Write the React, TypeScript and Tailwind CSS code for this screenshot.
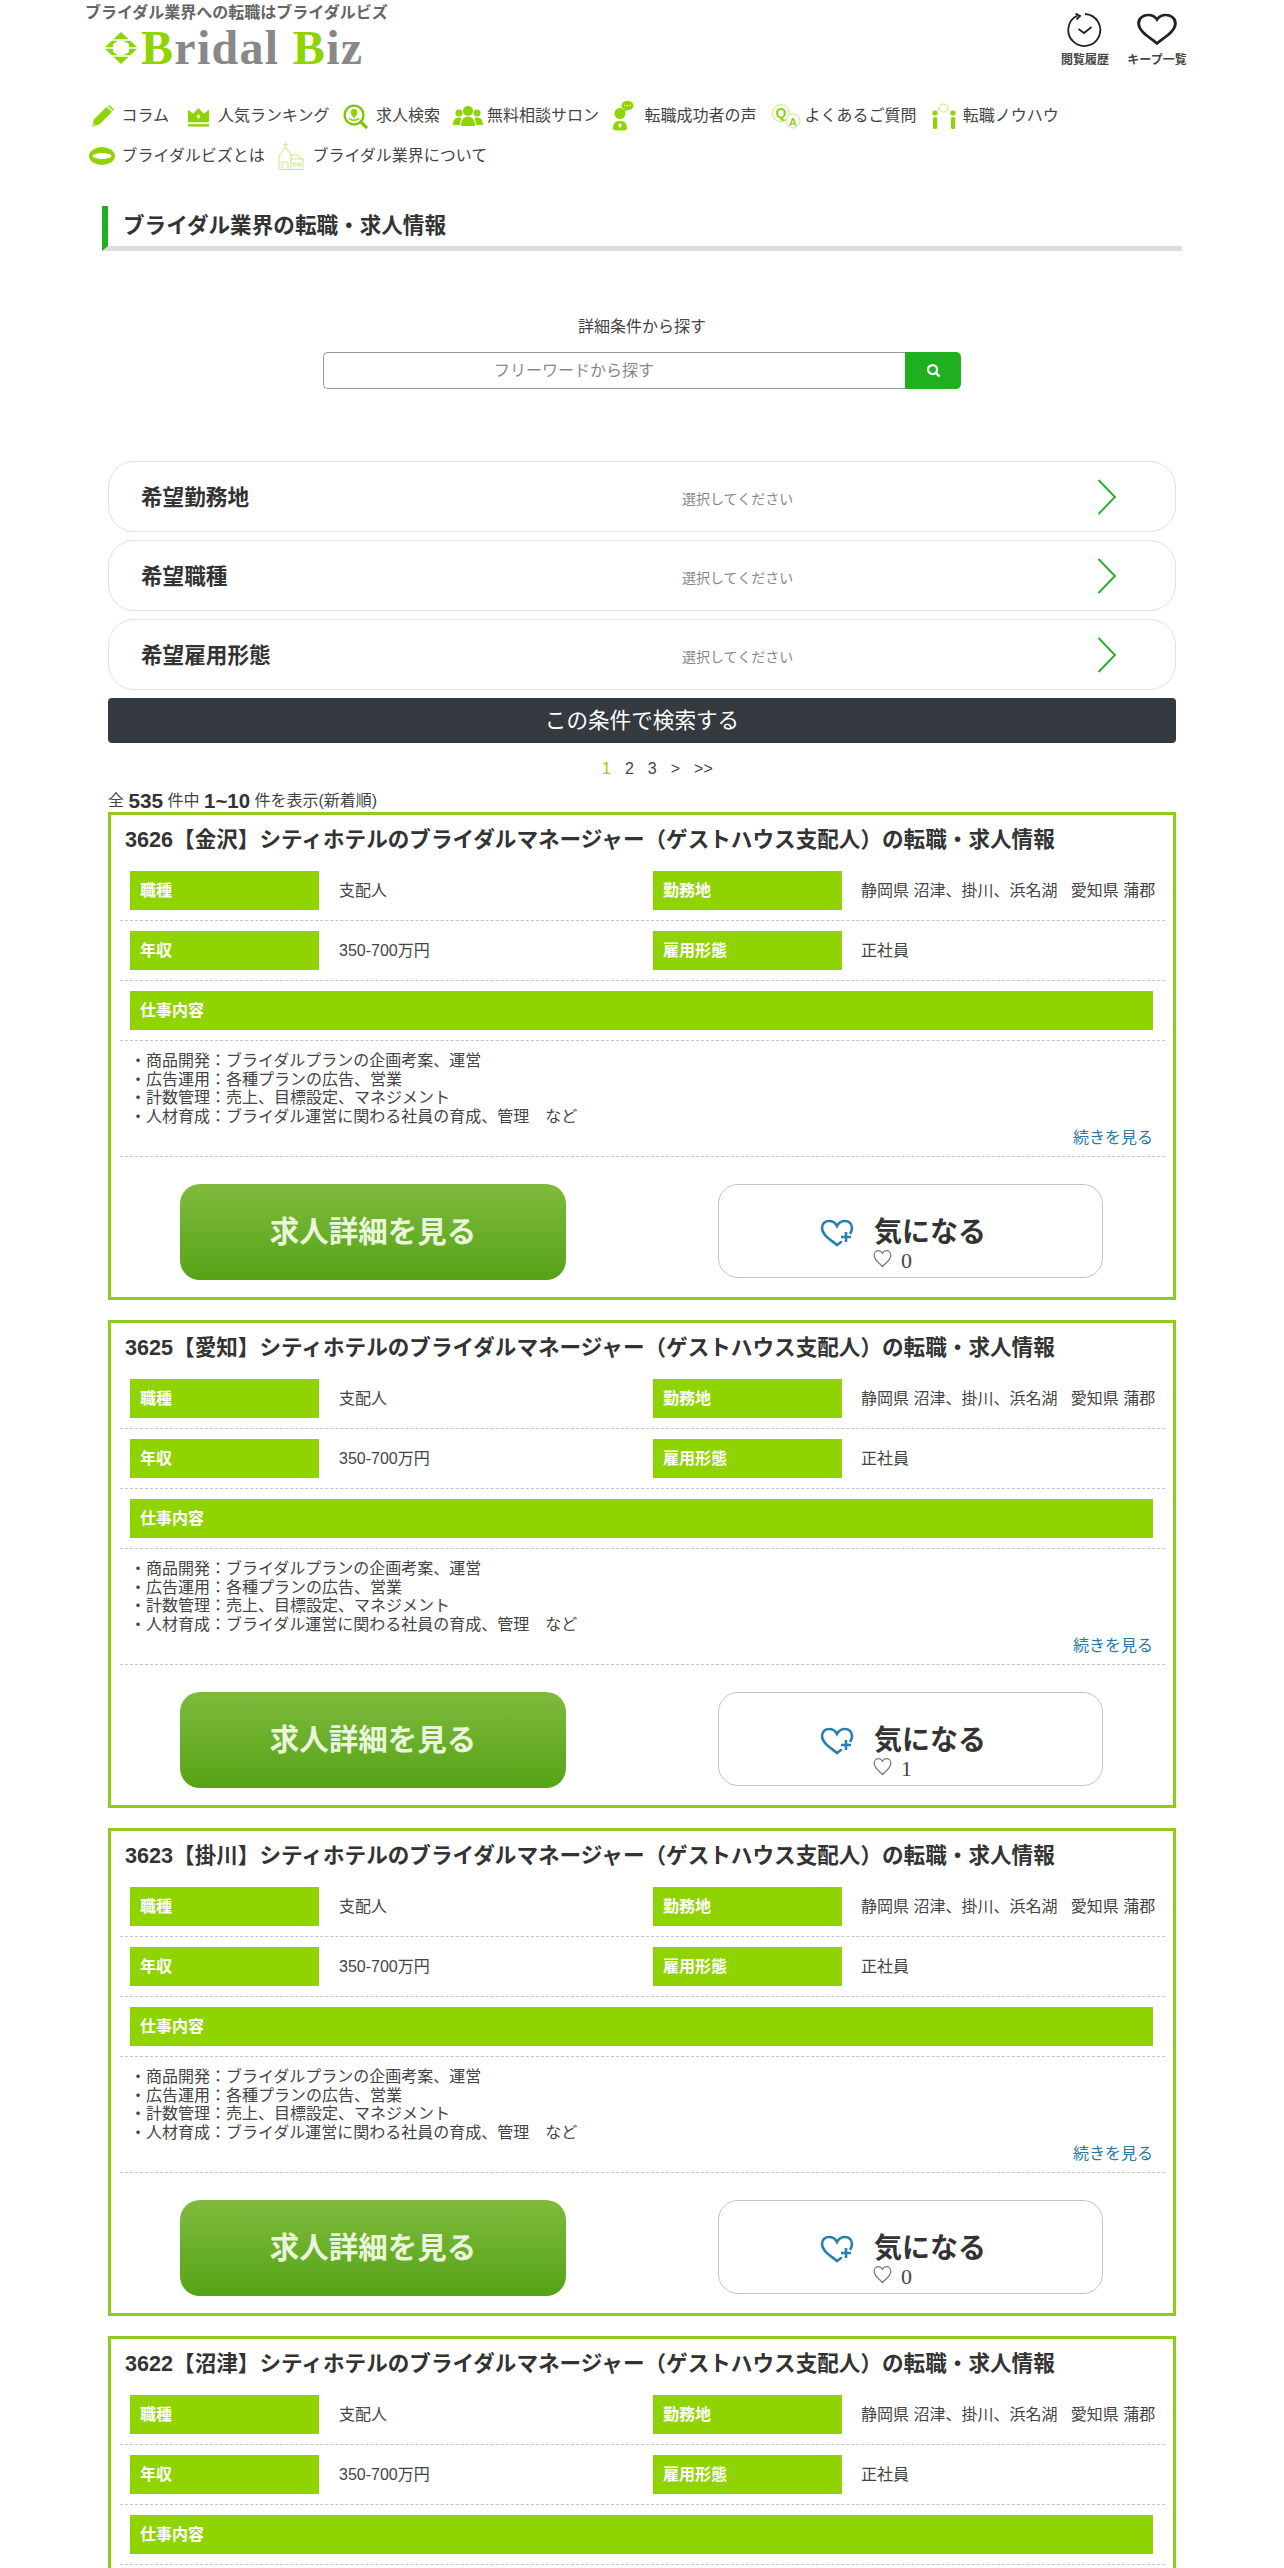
const font = "font-['Liberation_Sans','Noto_Sans_CJK_JP',sans-serif]";

const heartPath = "M12 21 C9 17.5 2 13.5 2 7.5 C2 4 4.6 2 7.2 2 C9.2 2 11 3.1 12 5 C13 3.1 14.8 2 16.8 2 C19.4 2 22 4 22 7.5 C22 13.5 15 17.5 12 21 Z";

function LogoMark() {
  return (
    <svg viewBox="0 0 34 32" className="w-[34px] h-[32px] shrink-0">
      <path d="M17 0 L34 16 L17 32 L0 16 Z" fill="#8fd400" />
      <path d="M14 9 H20 L25 12 V20 L20 23 H14 L9 20 V12 Z" fill="#fff" />
      <path d="M0 16 H10 M24 16 H34 M7 8 H27 M7 24 H27" stroke="#fff" strokeWidth="1.300" />
    </svg>
  );
}

function PencilIcon() {
  return (
    <svg viewBox="0 0 24 24" className="w-[23px] h-[23px] ml-[2px] shrink-0">
      <path d="M1 23 L3 15 L16 2 L22 7 L9 20 Z" fill="#8fd400" />
      <path d="M17.500 1 L19 0 L24 4.500 L23 6 Z" fill="#8fd400" />
      <path d="M1 23 L2 18.500 L5.500 22 Z" fill="#c5e88a" />
    </svg>
  );
}

function CrownIcon() {
  return (
    <svg viewBox="0 0 24 24" className="w-[23px] h-[23px] ml-[5px] shrink-0">
      <path d="M1 5 L6.500 9 L12 3 L17.500 9 L23 5 V18 H1 Z" fill="#8fd400" />
      <path d="M12 9.500 L14 12 L12 14.500 L10 12 Z" fill="#fff" />
      <rect x="1" y="20" width="22" height="2.500" fill="#8fd400" />
    </svg>
  );
}

function SearchPersonIcon() {
  return (
    <svg viewBox="0 0 26 26" className="w-[25px] h-[25px] shrink-0">
      <circle cx="11.500" cy="11.500" r="9.800" fill="none" stroke="#7cc600" strokeWidth="2.400" />
      <path d="M18.500 18.500 L24 24" stroke="#7cc600" strokeWidth="3.200" strokeLinecap="round" />
      <path d="M11.500 5 C14 5 15 7 15 8.500 C15 11 13 12.500 11.500 15 C10 12.500 8 11 8 8.500 C8 7 9 5 11.500 5 Z" fill="#8fd400" />
      <path d="M6.500 14.500 C7.500 17.500 15.500 17.500 16.500 14.500" fill="none" stroke="#8fd400" strokeWidth="1.600" />
    </svg>
  );
}

function PeopleIcon() {
  return (
    <svg viewBox="0 0 30 24" className="w-[30px] h-[24px] shrink-0">
      <g fill="#8fd400">
        <circle cx="6" cy="9" r="3.600" />
        <path d="M0 21 C0 15 3 13.500 6 13.500 C7 13.500 8 13.700 8.800 14.200 C7.500 16 7 18.500 7 21 Z" />
        <circle cx="24" cy="9" r="3.600" />
        <path d="M30 21 C30 15 27 13.500 24 13.500 C23 13.500 22 13.700 21.200 14.200 C22.500 16 23 18.500 23 21 Z" />
        <circle cx="15" cy="7" r="5" />
        <path d="M8 22 C8 15 11 12.800 15 12.800 C19 12.800 22 15 22 22 Z" />
      </g>
    </svg>
  );
}

function VoiceIcon() {
  return (
    <svg viewBox="0 0 22 32" className="w-[22px] h-[32px] shrink-0">
      <g fill="#8fd400">
        <path d="M15.500 1 C19 1 21.500 3 21.500 5.500 C21.500 8 19 10 15.500 10 L12 12 L12.500 9.500 C10.500 8.700 9.500 7.200 9.500 5.500 C9.500 3 12 1 15.500 1 Z" />
        <circle cx="8" cy="13.500" r="5.500" />
        <path d="M1 29 C1 23 3.500 21 8 21 C12.500 21 15 23 15 29 C15 31 1 31 1 29 Z" />
      </g>
      <g fill="#fff">
        <circle cx="12.800" cy="5.500" r="0.800" />
        <circle cx="15.500" cy="5.500" r="0.800" />
        <circle cx="18.200" cy="5.500" r="0.800" />
        <path d="M8 23 L10 25 L8 28 L6 25 Z" />
      </g>
    </svg>
  );
}

function QaIcon() {
  return (
    <svg viewBox="0 0 30 25" className="w-[30px] h-[25px] ml-[1px] shrink-0">
      <circle cx="10" cy="9" r="8.500" fill="none" stroke="#c5e88a" strokeWidth="1" />
      <circle cx="22" cy="17" r="7" fill="#fff" stroke="#c5e88a" strokeWidth="1" />
      <text x="10" y="14" textAnchor="middle" fontSize="14" fontWeight="700" fill="#8fd400" fontFamily="Liberation Sans">Q</text>
      <text x="22" y="21.500" textAnchor="middle" fontSize="11" fontWeight="700" fill="#8fd400" fontFamily="Liberation Sans">A</text>
    </svg>
  );
}

function KnowhowIcon() {
  return (
    <svg viewBox="0 0 24 26" className="w-[24px] h-[26px] ml-[2px] shrink-0">
      <g fill="#8fd400">
        <circle cx="3" cy="10" r="2.600" />
        <circle cx="21" cy="10" r="2.600" />
        <rect x="1" y="14" width="4.200" height="12" rx="1.500" />
        <rect x="19" y="14" width="4.200" height="12" rx="1.500" />
      </g>
      <ellipse cx="11.500" cy="5" rx="4.500" ry="4" fill="none" stroke="#b8e070" strokeWidth="0.800" />
      <path d="M5 9 C6 6 7 6 7.500 6 M19 9 C18 7 17 7 15.500 7" fill="none" stroke="#b8e070" strokeWidth="0.800" />
    </svg>
  );
}

function RingIcon() {
  return (
    <svg viewBox="0 0 26 20" className="w-[26px] h-[20px] shrink-0">
      <ellipse cx="13" cy="10" rx="13" ry="9" fill="#8fd400" />
      <ellipse cx="13" cy="10" rx="9.500" ry="3" fill="#fff" />
    </svg>
  );
}

function ChurchIcon() {
  return (
    <svg viewBox="0 0 26 28" className="w-[26px] h-[28px] shrink-0">
      <g fill="none" stroke="#c5e88a" strokeWidth="1">
        <path d="M7.500 0.500 V5 M5.500 2.500 H9.500" />
        <path d="M1 14 L7.500 5 L13 13 V27.500 H1 Z" />
        <path d="M13 17 H25 V27.500 H13 M12 13 L19 13 L25.500 18" />
        <path d="M4 27.500 V20 H10 V27.500" />
        <path d="M15.500 21 H18 V24 H15.500 Z M20 21 H22.500 V24 H20 Z" />
      </g>
    </svg>
  );
}

function NavItem({ icon, width, label }: { icon: React.ReactNode; width: string; label: string }) {
  return (
    <div className="flex items-center gap-[7px] mr-[13px]">
      <div className={`${width} flex items-center`}>{icon}</div>
      <span className="text-[16px] text-[#444]">{label}</span>
    </div>
  );
}

function SearchRow({ label }: { label: string }) {
  return (
    <div className="h-[71px] mb-[8px] flex items-center pl-[32px] pr-[58px] rounded-[26px] border border-[#e2e2e2]">
      <div className="w-[541px] pt-[3px] text-[21.6px] font-bold text-[#333]">{label}</div>
      <div className="flex-1 pt-[5px] text-[14px] text-[#888]">選択してください</div>
      <svg viewBox="0 0 20 36" className="w-[20px] h-[36px]">
        <path d="M1.500 1 L18 18 L1.500 35" fill="none" stroke="#1db022" strokeWidth="1.800" />
      </svg>
    </div>
  );
}

function Label({ text, className }: { text: string; className: string }) {
  return (
    <div className={`${className} h-[39px] flex items-center pl-[10px] pt-[1px] bg-[#8fd400] text-white font-bold text-[16px]`}>{text}</div>
  );
}

function JobCard({ no, area, count }: { no: string; area: string; count: number }) {
  return (
    <div className="h-[488px] mb-[20px] border-[3px] border-[#8ecb1a]">
      <div className="h-[56px] flex items-center pl-[14px] pb-[5px] text-[21.6px] font-bold text-[#333] whitespace-nowrap">
        {no}【{area}】シティホテルのブライダルマネージャー（ゲストハウス支配人）の転職・求人情報
      </div>
      <div className="ml-[9px] mr-[8px]">
        <div className="flex pl-[10px] pb-[10px] border-b border-dashed border-[#c4c4c4]">
          <Label text="職種" className="w-[189px]" />
          <div className="w-[334px] pl-[20px] flex items-center text-[16px] text-[#444]">支配人</div>
          <Label text="勤務地" className="w-[189px]" />
          <div className="flex-1 pl-[19px] flex items-center text-[16px] text-[#444] whitespace-nowrap">静岡県 沼津、掛川、浜名湖&nbsp;&nbsp;&nbsp;愛知県 蒲郡</div>
        </div>
        <div className="flex pl-[10px] pt-[10px] pb-[10px] border-b border-dashed border-[#c4c4c4]">
          <Label text="年収" className="w-[189px]" />
          <div className="w-[334px] pl-[20px] flex items-center text-[16px] text-[#444]">350-700万円</div>
          <Label text="雇用形態" className="w-[189px]" />
          <div className="flex-1 pl-[19px] flex items-center text-[16px] text-[#444]">正社員</div>
        </div>
        <div className="px-[10px] pr-[12px] pt-[10px] pb-[10px] border-b border-dashed border-[#c4c4c4]">
          <Label text="仕事内容" className="w-full" />
        </div>
        <div className="pt-[11px] pb-[7px] pl-[10px] pr-[12px] border-b border-dashed border-[#c4c4c4]">
          <div className="text-[16px] leading-[18.7px] text-[#444]">
            <div>・商品開発：ブライダルプランの企画考案、運営</div>
            <div>・広告運用：各種プランの広告、営業</div>
            <div>・計数管理：売上、目標設定、マネジメント</div>
            <div>・人材育成：ブライダル運営に関わる社員の育成、管理　など</div>
          </div>
          <div className="h-[22px] flex items-center justify-end text-[16px] text-[#2a78a8]">続きを見る</div>
        </div>
      </div>
      <div className="flex pl-[69px] pt-[27px]">
        <div className="w-[386px] h-[96px] flex items-center justify-center rounded-[20px] bg-gradient-to-b from-[#7fba3c] to-[#55a314] text-[29.5px] font-bold text-[#eaf6dc]">
          求人詳細を見る
        </div>
        <div className="ml-[152px] w-[385px] h-[94px] pt-[31px] flex flex-col items-center rounded-[20px] border border-[#c4c4c4]">
          <div className="flex items-center h-[34px] gap-[20px] mr-[15px]">
            <svg viewBox="0 0 34 28" className="w-[34px] h-[28px]">
              <path d="M17 26 C11 21 2 16 2 9 C2 4.500 5.500 2 9 2 C12.500 2 15.500 4 17 7 C18.500 4 21.500 2 25 2 C28.500 2 32 4.500 32 9 C32 11 31.500 12.500 30.500 14" fill="none" stroke="#2a7fb0" strokeWidth="2.600" strokeLinecap="round" />
              <path d="M17 26 L21 23" fill="none" stroke="#2a7fb0" strokeWidth="2.600" strokeLinecap="round" />
              <path d="M26 13 V23 M21 18 H31" stroke="#2a7fb0" strokeWidth="2.600" />
            </svg>
            <span className="text-[28px] font-bold text-[#333]">気になる</span>
          </div>
          <div className="flex items-center gap-[7px] mr-[38px] mt-[1px]">
            <svg viewBox="0 0 24 24" className="w-[23px] h-[20px] -mt-[4px]">
              <path d={heartPath} fill="none" stroke="#777" strokeWidth="1.500" />
            </svg>
            <span className="font-['Liberation_Serif',serif] text-[22px] leading-[20px] text-[#444]">{count}</span>
          </div>
        </div>
      </div>
    </div>
  );
}

export default function App() {
  return (
    <div className={`${font} h-[2568px] overflow-hidden bg-white`}>
      <header className="h-[95px] flex justify-between pl-[85px] pr-[96px]">
        <div>
          <p className="h-[26px] pt-[2px] text-[16px] leading-[22px] font-bold text-[#666]">ブライダル業界への転職はブライダルビズ</p>
          <div className="flex items-center gap-[3px] ml-[19px] h-[44px]">
            <LogoMark />
            <span className="font-['Liberation_Serif',serif] font-bold text-[48px] leading-[44px] tracking-[1.300px] text-[#888]">
              <span className="text-[#8fd400]">B</span>ridal <span className="text-[#8fd400]">B</span>iz
            </span>
          </div>
        </div>
        <div className="flex gap-[10px] pt-[12px]">
          <div className="w-[62px] flex flex-col items-center">
            <svg viewBox="0 0 36 36" className="w-[36px] h-[36px]">
              <path d="M10.500 3.500 A16 16 0 1 0 18 2" fill="none" stroke="#222" strokeWidth="1.800" />
              <path d="M8.500 1.500 L13 4 L9.500 7.500" fill="none" stroke="#222" strokeWidth="1.800" />
              <path d="M11.500 17 L17 21 L24.500 15" fill="none" stroke="#222" strokeWidth="1.800" />
            </svg>
            <span className="mt-[3px] text-[12px] font-bold text-[#444] whitespace-nowrap">閲覧履歴</span>
          </div>
          <div className="w-[62px] flex flex-col items-center">
            <svg viewBox="0 0 24 24" className="w-[44px] h-[36px]" preserveAspectRatio="none">
              <path d={heartPath} fill="none" stroke="#222" strokeWidth="1.600" />
            </svg>
            <span className="mt-[3px] text-[12px] font-bold text-[#444] whitespace-nowrap">キープ一覧</span>
          </div>
        </div>
      </header>

      <nav className="pl-[89px] pt-[1px]">
        <div className="h-[40px] flex items-center">
          <NavItem icon={<PencilIcon />} width="w-[25.5px]" label="コラム" />
          <NavItem icon={<CrownIcon />} width="w-[29px]" label="人気ランキング" />
          <NavItem icon={<SearchPersonIcon />} width="w-[26.5px]" label="求人検索" />
          <NavItem icon={<PeopleIcon />} width="w-[27px]" label="無料相談サロン" />
          <NavItem icon={<VoiceIcon />} width="w-[25.5px]" label="転職成功者の声" />
          <NavItem icon={<QaIcon />} width="w-[28px]" label="よくあるご質問" />
          <NavItem icon={<KnowhowIcon />} width="w-[26px]" label="転職ノウハウ" />
        </div>
        <div className="h-[40px] flex items-center">
          <NavItem icon={<RingIcon />} width="w-[25.5px]" label="ブライダルビズとは" />
          <NavItem icon={<ChurchIcon />} width="w-[27.5px]" label="ブライダル業界について" />
        </div>
      </nav>

      <h1 className="ml-[102px] mt-[30px] w-[1080px] h-[45px] flex items-center pl-[15px] border-l-[6px] border-l-[#1db022] border-b-[5px] border-b-[#dcdcdc] text-[21.6px] font-bold text-[#333]">
        ブライダル業界の転職・求人情報
      </h1>

      <div className="mt-[64px] text-center text-[16px] leading-[24px] text-[#444]">詳細条件から探す</div>
      <div className="mt-[13px] mx-auto w-[638px] h-[37px] flex">
        <div className="flex-1 flex items-center pl-[170px] border border-r-0 border-[#999] rounded-l-[5px] text-[16px] text-[#888]">フリーワードから探す</div>
        <div className="w-[56px] flex items-center justify-center bg-[#1fb01f] rounded-r-[5px]">
          <svg viewBox="0 0 16 16" className="w-[15px] h-[15px]">
            <circle cx="7" cy="7" r="4.800" fill="none" stroke="#fff" strokeWidth="2.400" />
            <path d="M10.500 10.500 L14.500 14.500" stroke="#fff" strokeWidth="2.600" />
          </svg>
        </div>
      </div>

      <main className="mx-[108px] mt-[72px]">
        <SearchRow label="希望勤務地" />
        <SearchRow label="希望職種" />
        <SearchRow label="希望雇用形態" />
        <div className="h-[45px] pt-[2px] flex items-center justify-center rounded-[4px] bg-[#343a40] text-[21.6px] text-white">この条件で検索する</div>

        <div className="h-[47px] pl-[494px] pt-[5px] flex items-center gap-[14px] text-[16px] text-[#444]">
          <span className="text-[#8fd400]">1</span>
          <span>2</span>
          <span>3</span>
          <span>&gt;</span>
          <span>&gt;&gt;</span>
        </div>

        <div className="h-[22px] flex items-center text-[16px] text-[#444] whitespace-pre">
          全 <b className="text-[20.8px] text-[#333]">535</b> 件中 <b className="text-[20.4px] text-[#333]">1~10</b> 件を表示(新着順)
        </div>

        <JobCard no="3626" area="金沢" count={0} />
        <JobCard no="3625" area="愛知" count={1} />
        <JobCard no="3623" area="掛川" count={0} />
        <JobCard no="3622" area="沼津" count={0} />
      </main>
    </div>
  );
}
